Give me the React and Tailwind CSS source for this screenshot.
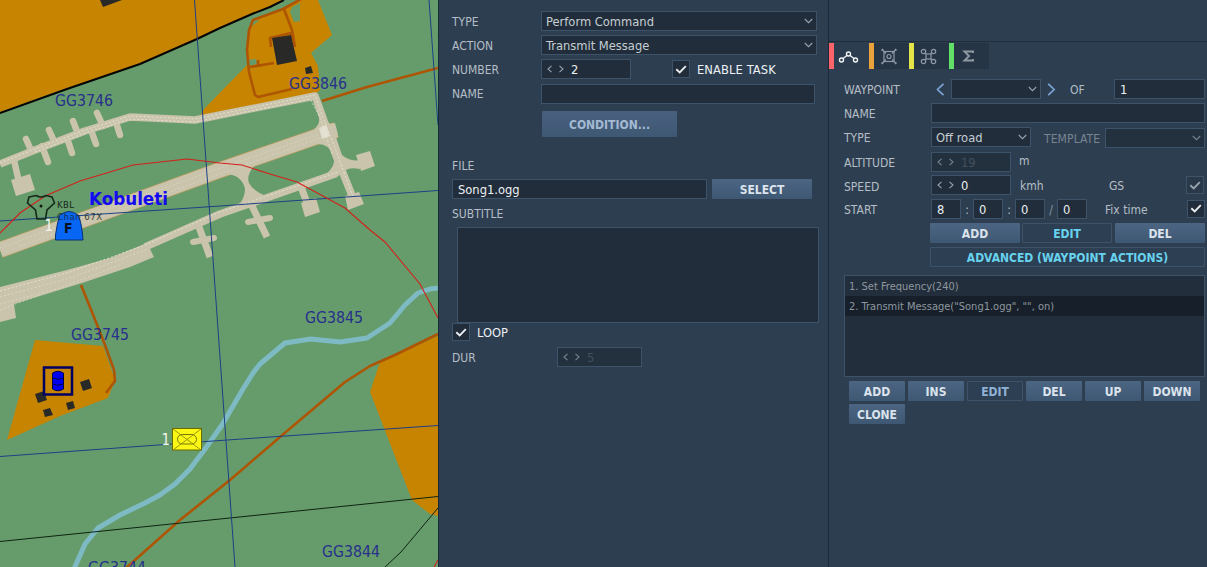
import React from "react";

const CONCRETE = "#c9c4ab";

function MapView() {
  const road = { fill: "none", stroke: "#ae5503", strokeWidth: 2.6, strokeLinejoin: "round" };
  const label = { fill: "#27308c", fontSize: 15.8, lengthAdjust: "spacingAndGlyphs", textLength: 58 };
  return (
    <svg className="block h-[567px] w-[438px] shrink-0 font-['DejaVu_Sans_Condensed','DejaVu_Sans',sans-serif]" viewBox="0 0 438 567">
      <rect width="438" height="567" fill="#669c6b" />
      {/* settlements */}
      <g fill="#c68400">
        <path d="M0 0H284L252 14L197 39L140 64L67 88L0 112Z" />
        <path d="M300 0H318L332 35L311 53L318 66L320 90L312 97L220 112L200 116L204 109L247 65L249 30L253 20L283 9Z" />
        <path d="M438 336L380 362L370 392L412 500L430 514L438 516Z" />
        <path d="M35 340L103 346L115 380L108 398L60 416L7 440Z" />
      </g>
      <path d="M292 7L300 3V21L294 22L290 12ZM248 60L256 59L257 64L248 66ZM252 21L260 20L252 26Z" fill="#669c6b" />
      {/* roads */}
      <g {...road}>
        <path d="M301 -1L283 9L253 20L249 30L247 50L249 72L255 95L258 97L292 89" />
        <path d="M284 9L292 30L295 47" />
        <path d="M250 67L274 63M258 65V60M271 47L270 38L291 33L292 40" />
        <path d="M322 101L367 87L438 68" />
        <path d="M438 334L395 355L370 366L345 382L280 437L230 480L180 520L126 568" />
        <path d="M81 285L92 312L105 345L114 370L115 381L106 393" />
      </g>
      <g fill="#292a27">
        <path d="M272 38L291 35L297 61L277 65ZM305 68L311 66L313 73L306 74ZM100 0L103 7L122 0Z" />
        <path d="M80 382L89 379L92 388L83 391ZM35 394L44 391L47 400L38 403ZM43 410L50 408L53 415L45 417ZM66 403L73 401L75 408L68 410Z" />
      </g>
      {/* river */}
      <path d="M438 288L430 289L418 293L405 305L390 323L367 338L340 342L311 339L285 343L260 364L253 373L243 389L222 425L205 449L190 469L175 484L160 495L145 503L120 515L98 528L85 544L74 569" fill="none" stroke="#7ebac3" strokeWidth="5" strokeLinejoin="round" />
      {/* airfield */}
      <path d="M0 250L220 170L336 130" fill="none" stroke="#b79d62" strokeWidth="16.5" />
      <path d="M0 250L220 170L336 130" fill="none" stroke={CONCRETE} strokeWidth="15" />
      <g fill="none" stroke={CONCRETE} strokeWidth="7.5" strokeLinejoin="round">
        <path d="M0 164L35 150L85 131L130 117L195 120L220 115L315 96L322 115L335 153L355 203" />
        <path d="M145 247L220 214L335 174L348 163" />
      </g>
      <g stroke={CONCRETE} strokeWidth="6.5" strokeLinecap="round">
        <path d="M26 139L31 150M49 130L54 141M73 121L78 134M97 113L103 126M42 146L48 162M67 138L72 153M91 130L96 144M116 122L120 135M14 160L18 178" />
      </g>
      <g stroke={CONCRETE} strokeWidth="7" fill="none">
        <path d="M199 227L210 257M300 184L307 203M252 206L267 237" />
        <path d="M193 242L214 238M248 222L270 218" strokeLinecap="round" strokeWidth="6" />
      </g>
      <g fill={CONCRETE}>
        <path d="M0 287L67 270L110 258L147 243L154 257L130 267L82 283L14 304L16 318L0 322Z" />
        <path d="M11 180L30 174L35 190L16 196Z" />
        <path d="M356 155L370 151L375 166L361 171ZM345 196L359 192L364 204L348 210ZM301 203L316 198L320 212L305 217ZM325 126L335 123L338 134L328 138Z" />
        <path d="M226 174Q242 175 245 189Q245 198 238 206L266 196Q253 191 249 183Q246 176 254 166Z" />
        <path d="M319 116Q321 127 308 133L318 144Q329 144 334 156Q336 168 322 177L346 170Q350 167 360 169V160Q350 162 342 155L332 125Z" />
      </g>
      <g fill="none" stroke="#ebe8dc" strokeWidth=".8" strokeDasharray="2 2">
        <path d="M0 163L35 149L85 130L130 116L195 119L220 114L315 95L322 115L337 153L353 197" />
        <path d="M35 152L85 133L130 119L195 122L220 117L310 99L319 115L332 153" />
        <path d="M0 291L70 272L145 245L220 212L338 172" />
        <path d="M0 297L70 278L148 249M0 304L60 288L120 265M0 310L40 295" opacity=".6" />
        <path d="M0 248L220 168L320 134M20 246L220 174L320 138" opacity=".45" />
      </g>
      <path d="M319 128L326 125L330 136L322 139Z" fill="#efece3" opacity=".65" />
      {/* boundaries and grid */}
      <path d="M0 113L67 89L140 64L197 39L220 28L252 14L270 7L284 0" fill="none" stroke="#050505" strokeWidth="2" />
      <path d="M0 541.5L220 519L438 496.5M385 567L401 552L438 508" fill="none" stroke="#0e2412" />
      <path d="M194.500 0L235 567M429 0L438 125M0 221L220 206L438 190.500M0 456.500L220 440.500L438 425.500" fill="none" stroke="#1c4087" />
      <path d="M0 233L20 213L45 196L80 181L133 165L187 159L220 163L242 165L270 174L297 182L345 208L370 230L385 242L420 284L438 318M434 567L438 560" fill="none" stroke="#d2201b" strokeWidth="1.100" />
      {/* grid names */}
      <text x="55" y="106" {...label}>GG3746</text>
      <text x="289" y="89" {...label}>GG3846</text>
      <text x="305" y="323" {...label}>GG3845</text>
      <text x="71" y="340" {...label}>GG3745</text>
      <text x="322" y="557" {...label}>GG3844</text>
      <text x="88" y="573" {...label}>GG3744</text>
      {/* beacon */}
      <path d="M29 197L36 195.500Q41 198.500 46 195.500L52 197L54.500 203L47 210L45.500 219H37L35.500 210L27.500 203Z" fill="none" stroke="#14291a" strokeWidth="1.600" />
      <circle cx="41" cy="206" r="1.500" fill="#10180f" />
      <text x="44.500" y="230.500" fontSize="15" fill="#f4f4ee">1</text>
      <path d="M55.500 240V235Q57 223 60 215Q69 208 78 215Q82 223 83 240Z" fill="#0866f5" stroke="#093274" />
      <text x="64" y="233" fontSize="14" fontWeight="bold" fill="#061224">F</text>
      <text x="57" y="208" fontSize="9.500" textLength="17" fill="#15251a">KBL</text>
      <text x="57" y="220" fontSize="9.500" textLength="45" fill="#15251a" opacity=".8">Chan 67X</text>
      <text x="89" y="205" fontFamily="DejaVu Sans" fontSize="17" fontWeight="bold" textLength="79" lengthAdjust="spacingAndGlyphs" fill="#140af0">Kobuleti</text>
      {/* depot */}
      <rect x="44" y="367.500" width="28" height="27" fill="none" stroke="#000063" strokeWidth="2.500" />
      <path d="M52.500 373Q58 369.500 63.500 373V389Q58 392.500 52.500 389Z" fill="#0000f0" stroke="#000049" />
      <path d="M52.500 378Q58 380.500 63.500 378M52.500 384Q58 386.500 63.500 384" fill="none" stroke="#000049" />
      {/* armour unit */}
      <text x="161.500" y="444.500" fontSize="15" fill="#f4f4ee">1</text>
      <rect x="172.500" y="428.500" width="29" height="21.500" fill="#fbf714" stroke="#6a6b00" />
      <path d="M173 429L201 450M201 429L173 450" stroke="#918f08" strokeWidth=".9" />
      <rect x="177.500" y="434.500" width="19" height="9.500" rx="4.700" fill="none" stroke="#77760a" />
    </svg>
  );
}

const Chevron = ({ className = "" }) => (
  <svg className={`h-[6px] w-[9px] shrink-0 ${className}`} viewBox="0 0 9 6" fill="none" stroke="currentColor" strokeWidth="1.100"><path d="M.8 1L4.500 4.700L8.200 1" /></svg>
);

function Field({ className = "", children }) {
  return <div className={`box-border flex h-5 shrink-0 items-center border border-[#3c536a] text-[12.8px] ${className}`}>{children}</div>;
}

const Entry = ({ className = "", value }) => (
  <Field className={`bg-[#212d3a] pl-[5px] ${className}`}><span className="pt-[2px] text-[#eef1f4]">{value}</span></Field>
);

function Select({ className = "", value = "", muted }) {
  return (
    <Field className={`justify-between pl-1 pr-[3px] ${muted ? "bg-[#23313f]" : "bg-[#212d3a]"} ${className}`}>
      <span className="pt-[2px] text-[#c6cdd3]">{value}</span>
      <Chevron className={muted ? "text-[#76828e]" : "text-[#9aa5af]"} />
    </Field>
  );
}

function Spin({ className = "", value, disabled }) {
  return (
    <Field className={`pl-[5px] ${disabled ? "bg-[#23313f]" : "bg-[#212d3a]"} ${className}`}>
      <svg className={`h-[8px] w-[17px] shrink-0 ${disabled ? "text-[#77838f]" : "text-[#98a2ac]"}`} viewBox="0 0 17 8" fill="none" stroke="currentColor" strokeWidth="1.100"><path d="M4.500 .8L1 4L4.500 7.200M12.500 .8L16 4L12.500 7.200" /></svg>
      <span className={`ml-[7px] pt-[2px] ${disabled ? "text-[#43505c]" : "text-[#eef1f4]"}`}>{value}</span>
    </Field>
  );
}

function Check({ className = "", muted }) {
  return (
    <div className={`box-border flex size-[18px] shrink-0 items-center justify-center border border-[#3c536a] ${muted ? "bg-[#2a3949]" : "bg-[#212d3a]"} ${className}`}>
      <svg className={`h-[9px] w-[12px] ${muted ? "text-[#98a3ad]" : "text-[#e9edf0]"}`} viewBox="0 0 12 9" fill="none" stroke="currentColor" strokeWidth="1.900"><path d="M1.300 4.200L4.700 7.400L10.800 1.200" /></svg>
    </div>
  );
}

function Button({ className = "h-5", kind = "solid", children }) {
  const kinds = {
    solid: "bg-linear-to-b from-[#4c6583] to-[#3e5772] text-[#dbe3ec]",
    dim: "bg-linear-to-b from-[#49617f] to-[#3e5772] text-[#a4bad3]",
    cyan: "border border-[#3c536a] bg-[#2d3f53] text-[#68d3ee]",
    ghost: "border border-[#3c536a] bg-[#2d3f53] text-[#91b2d6]",
  };
  return (
    <div className={`box-border flex shrink-0 items-center justify-center rounded-[1px] text-[12px] font-bold ${kinds[kind]} ${className}`}>
      <span className="pt-[2px]">{children}</span>
    </div>
  );
}

const Row = ({ className = "", label, labelClass = "w-[89px] pt-[2px]", children }) => (
  <div className={`flex h-6 shrink-0 items-center ${className}`}>
    <span className={`shrink-0 text-[12px] ${labelClass}`}>{label}</span>
    {children}
  </div>
);

function ActionPanel() {
  return (
    <section className="box-border flex w-[390px] shrink-0 flex-col border-l border-[#1b2a38] pl-[13px] pt-[9px]">
      <Row label="TYPE"><Select className="w-[276px]" value="Perform Command" /></Row>
      <Row label="ACTION"><Select className="w-[276px]" value="Transmit Message" /></Row>
      <Row label="NUMBER">
        <Spin className="w-[90px]" value="2" />
        <Check className="ml-[41px]" />
        <span className="ml-[7px] pt-[2px] text-[12.8px] tracking-[0.1px] text-[#eef1f4]">ENABLE TASK</span>
      </Row>
      <Row label="NAME" labelClass="w-[89px]" className="mt-[1px]"><Entry className="w-[274px]" /></Row>
      <Button kind="dim" className="ml-[90px] mt-[5px] h-[26px] w-[135px]">CONDITION...</Button>
      <Row className="mt-[17px]" labelClass="" label="FILE" />
      <div className="mt-[1px] flex gap-[5px]">
        <Entry className="w-[255px]" value="Song1.ogg" />
        <Button className="h-5 w-[100px]">SELECT</Button>
      </div>
      <Row className="mt-[3px]" labelClass="" label="SUBTITLE" />
      <div className="ml-[5px] mt-[1px] box-border h-[96px] w-[362px] shrink-0 border border-[#3c536a] bg-[#212d3a]" />
      <div className="flex h-[18px] items-center">
        <Check />
        <span className="ml-[7px] mt-[3px] text-[12.8px] text-[#eef1f4]">LOOP</span>
      </div>
      <Row className="mt-1" label="DUR" labelClass="w-[105px] pt-[2px]"><Spin className="w-[85px]" value="5" disabled /></Row>
    </section>
  );
}

function Tab({ bar, active, children }) {
  return (
    <div className={`flex h-[26px] w-10 ${active ? "bg-[#2c3d4f] text-[#f2f5f7]" : "bg-[#263546] text-[#8e99a4]"}`}>
      <span className={`w-[5px] ${bar}`} />
      <svg className="h-[26px] w-[30px]" viewBox="0 0 30 26" fill="none" stroke="currentColor" strokeWidth="1.200">{children}</svg>
    </div>
  );
}

function Tabs() {
  return (
    <div className="flex h-[28px] border-t border-[#202e3c] pt-[1px]">
      <Tab bar="bg-[#ff646b]" active>
        <g strokeWidth="1.400"><circle cx="7.500" cy="17" r="2" /><circle cx="14.500" cy="11" r="2" /><circle cx="21.500" cy="17" r="2" /><path d="M9 15.500L13 12.500M16 12.500L20 15.500" /></g>
      </Tab>
      <Tab bar="bg-[#eaa23c]">
        <rect x="10" y="8.500" width="10" height="10" /><circle cx="15" cy="13.500" r="2" /><path d="M8 6.500L12 10.500M22 6.500L18 10.500M8 20.500L12 16.500M22 20.500L18 16.500" /><path d="M7.500 7.500L9 6M22.500 7.500L21 6M7.500 19.500L9 21M22.500 19.500L21 21" strokeWidth="1.500" />
      </Tab>
      <Tab bar="bg-[#e4e449]">
        <circle cx="9.500" cy="8.500" r="2.200" /><circle cx="19.500" cy="8.500" r="2.200" /><circle cx="9.500" cy="18.500" r="2.200" /><circle cx="19.500" cy="18.500" r="2.200" /><rect x="12" y="11" width="5" height="5" /><path d="M11 10L12 11M18 10L17 11M11 17L12 16M18 17L17 16" />
      </Tab>
      <Tab bar="bg-[#62df67]">
        <path d="M19 10V8.500H10.500L15 13L10.500 17.500H19V16" strokeWidth="1.900" />
      </Tab>
    </div>
  );
}

const Arrow = ({ className = "", d }) => (
  <svg className={`h-[13px] w-[9px] shrink-0 ${className}`} viewBox="0 0 9 13" fill="none" stroke="#7ba5d4" strokeWidth="1.700"><path d={d} /></svg>
);

function WaypointPanel() {
  return (
    <section className="box-border flex w-[379px] shrink-0 flex-col border-l border-[#1b2a38]">
      <div className="h-[41px]" />
      <Tabs />
      <div className="flex flex-col pl-[15px] pt-[8px]">
        <Row label="WAYPOINT" labelClass="w-[92px] pt-[2px]">
          <Arrow d="M7.500 .8L1.500 6.500L7.500 12.200" />
          <Select className="ml-[6px] w-[90px]" />
          <Arrow className="ml-[6px]" d="M1.200 .8L7.200 6.500L1.200 12.200" />
          <span className="ml-[14px] w-[44px] pt-[2px] text-[12px]">OF</span>
          <Entry className="w-[91px]" value="1" />
        </Row>
        <Row label="NAME" labelClass="w-[87px] pt-[2px]"><Entry className="w-[274px]" /></Row>
        <Row label="TYPE" labelClass="w-[87px] pt-[2px]">
          <Select className="w-[100px]" value="Off road" />
          <span className="ml-[13px] w-[61px] pt-[4px] text-[12px] tracking-[0.1px] text-[#788490]">TEMPLATE</span>
          <Select className="mt-[2px] w-[100px]" muted />
        </Row>
        <Row label="ALTITUDE" labelClass="w-[87px] pt-[2px]" className="mt-[1px]">
          <Spin className="w-[80px]" value="19" disabled />
          <span className="mb-[3px] ml-2 text-[12px]">m</span>
        </Row>
        <Row label="SPEED" labelClass="w-[87px] pt-[2px]">
          <Spin className="mb-[2px] w-[80px]" value="0" />
          <span className="ml-[9px] w-[89px] text-[12px]">kmh</span>
          <span className="w-[77px] text-[12px]">GS</span>
          <Check muted className="mb-[2px]" />
        </Row>
        <Row label="START" labelClass="w-[87px] pt-[2px]" className="-mt-px">
          <Entry className="w-[30px]" value="8" />
          <span className="w-3 pt-[2px] text-center text-[12px]">:</span>
          <Entry className="w-[30px]" value="0" />
          <span className="w-3 pt-[2px] text-center text-[12px]">:</span>
          <Entry className="w-[30px]" value="0" />
          <span className="w-3 pt-[2px] text-center text-[12px] text-[#8a959f]">/</span>
          <Entry className="w-[30px]" value="0" />
          <span className="ml-[18px] w-[82px] pt-[2px] text-[12px]">Fix time</span>
          <Check className="mb-[1px]" />
        </Row>
        <div className="ml-[86px] mt-[2px] flex">
          <Button className="h-5 w-[90px]">ADD</Button>
          <Button className="ml-[2px] h-5 w-[90px]" kind="cyan">EDIT</Button>
          <Button className="ml-[3px] h-5 w-[90px]">DEL</Button>
        </div>
        <Button className="ml-[86px] mt-1 h-5 w-[275px]" kind="cyan">ADVANCED (WAYPOINT ACTIONS)</Button>
        <div className="mt-2 box-border h-[102px] w-[361px] border border-[#3c536a] bg-[#222e3b] text-[11px] text-[#8e979f]">
          <div className="h-5 pl-1 leading-[22px]">1. Set Frequency(240)</div>
          <div className="h-5 bg-[#17202a] pl-1 leading-[22px]">2. Transmit Message("Song1.ogg", "", on)</div>
        </div>
        <div className="ml-[5px] mt-1 flex flex-wrap gap-[3px]">
          <Button className="h-5 w-[56px]">ADD</Button>
          <Button className="h-5 w-[56px]">INS</Button>
          <Button className="h-5 w-[56px]" kind="ghost">EDIT</Button>
          <Button className="h-5 w-[56px]">DEL</Button>
          <Button className="h-5 w-[56px]">UP</Button>
          <Button className="h-5 w-[56px]">DOWN</Button>
          <Button className="h-5 w-[56px]">CLONE</Button>
        </div>
      </div>
    </section>
  );
}

export default function App() {
  return (
    <div className="flex h-[567px] w-[1207px] overflow-hidden whitespace-nowrap bg-[#2d3e50] font-['DejaVu_Sans_Condensed','DejaVu_Sans',sans-serif] leading-none text-[#b5bec6]">
      <MapView />
      <ActionPanel />
      <WaypointPanel />
    </div>
  );
}
